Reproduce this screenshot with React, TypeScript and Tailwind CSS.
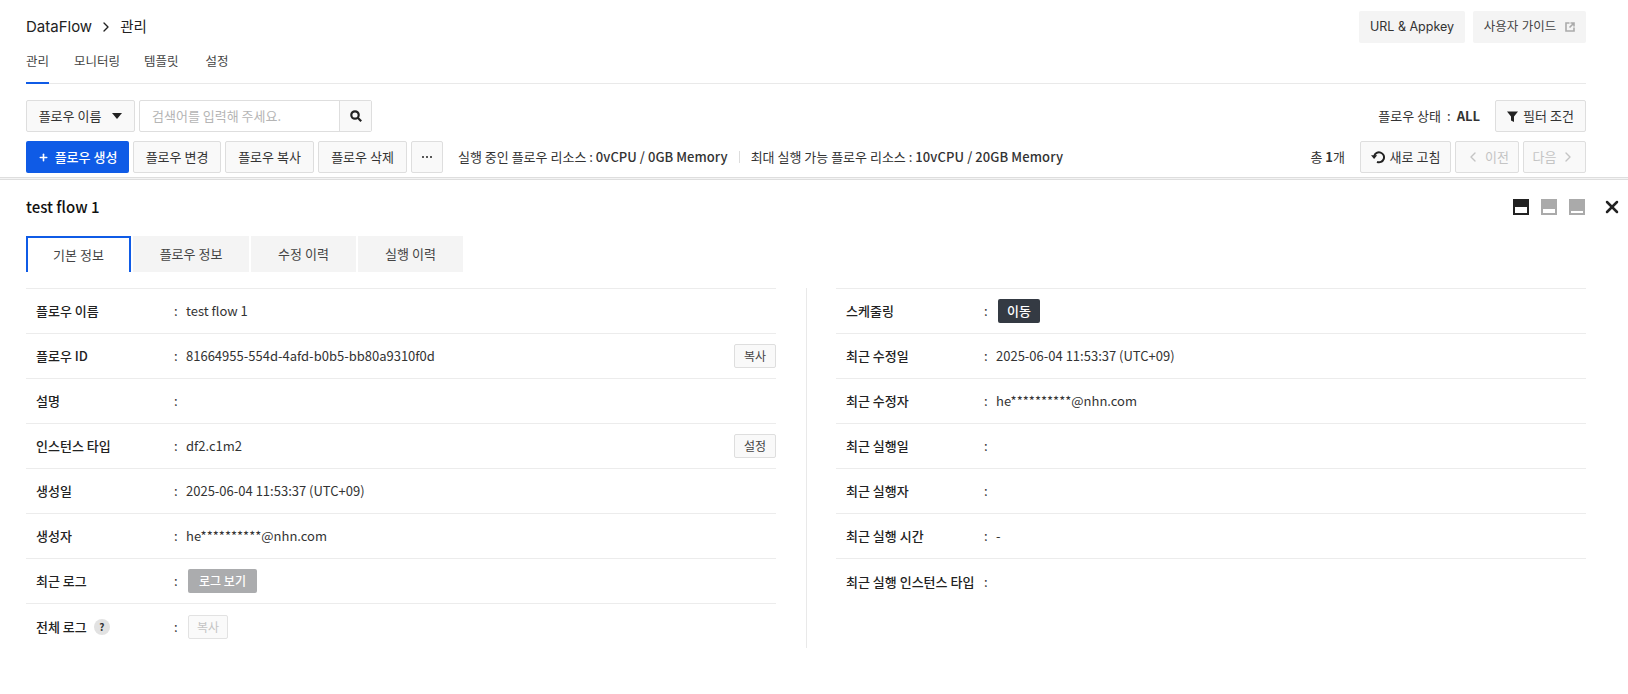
import React from 'react';
import { ChevronLeft, ChevronRight, Plus, X } from 'lucide-react';

const sans = 'font-["Noto_Sans_CJK_KR",sans-serif]';
const inter = 'font-["Inter","Noto_Sans_CJK_KR",sans-serif]';

const btn =
  'flex h-8 items-center justify-center rounded-[2px] border border-[#dedede] bg-[#f9f9f9] text-[13px] text-[#333]';

type Row = { label: string; value?: React.ReactNode; extra?: React.ReactNode; help?: boolean };

const SmallButton = ({ children, disabled }: { children: React.ReactNode; disabled?: boolean }) => (
  <button
    className={`flex h-6 items-center justify-center rounded-[2px] border text-[12px] ${
      disabled ? 'w-10 border-[#e2e2e2] bg-[#fafafa] text-[#c4c4c4]' : 'w-[42px] border-[#dedede] bg-[#f9f9f9] text-[#444]'
    }`}
  >
    {children}
  </button>
);

const leftRows: Row[] = [
  { label: '플로우 이름', value: 'test flow 1' },
  { label: '플로우 ID', value: '81664955-554d-4afd-b0b5-bb80a9310f0d', extra: <SmallButton>복사</SmallButton> },
  { label: '설명' },
  { label: '인스턴스 타입', value: 'df2.c1m2', extra: <SmallButton>설정</SmallButton> },
  { label: '생성일', value: '2025-06-04 11:53:37 (UTC+09)' },
  { label: '생성자', value: 'he**********@nhn.com' },
  {
    label: '최근 로그',
    value: (
      <span className="ml-0.5 flex h-6 w-[69px] items-center justify-center rounded-[2px] bg-[#abacae] text-[12px] font-medium text-white">
        로그 보기
      </span>
    ),
  },
  { label: '전체 로그', help: true, value: <span className="ml-0.5 block w-10"><SmallButton disabled>복사</SmallButton></span> },
];

const rightRows: Row[] = [
  {
    label: '스케줄링',
    value: (
      <span className="ml-0.5 flex h-6 w-[42px] items-center justify-center rounded-[2px] bg-[#343a43] text-[13px] font-medium text-white">
        이동
      </span>
    ),
  },
  { label: '최근 수정일', value: '2025-06-04 11:53:37 (UTC+09)' },
  { label: '최근 수정자', value: 'he**********@nhn.com' },
  { label: '최근 실행일' },
  { label: '최근 실행자' },
  { label: '최근 실행 시간', value: '-' },
  { label: '최근 실행 인스턴스 타입' },
];

const InfoRow = ({ row }: { row: Row }) => (
  <div className="flex h-[45px] items-center border-b border-[#ececec] pl-[10px] text-[13px] text-[#333] last:border-b-0">
    <div className="flex w-[138px] shrink-0 items-center gap-[7px] font-medium text-[#222]">
      {row.label}
      {row.help && (
        <span className="flex h-4 w-4 items-center justify-center rounded-full bg-[#e2e2e2] text-[10px] font-bold text-[#333]">
          ?
        </span>
      )}
    </div>
    <span className="w-3 shrink-0 whitespace-nowrap">:</span>
    <div className="flex-1">{row.value}</div>
    {row.extra}
  </div>
);

const PanelIcon = ({ mode }: { mode: 'top' | 'mid' | 'low' }) => {
  const fill = mode === 'top' ? '#222' : '#aaa';
  return (
    <svg width="16" height="16" viewBox="0 0 16 16">
      <rect width="16" height="16" fill={fill} />
      {mode === 'top' && <rect x="2" y="8" width="12" height="6" fill="#fff" />}
      {mode === 'mid' && <rect x="2" y="10" width="12" height="4" fill="#fff" />}
      {mode === 'low' && <rect x="2" y="12" width="12" height="2" fill="#fff" />}
    </svg>
  );
};

export default function App() {
  return (
    <div className={`h-[694px] w-[1628px] overflow-hidden bg-white ${sans}`}>
      {/* Top area */}
      <div className="pl-[26px] pr-[42px]">
        <div className={`flex h-[52px] items-center justify-between pt-[2px] ${inter}`}>
          <div className="flex items-center text-[15px] text-[#222]">
            DataFlow
            <ChevronRight className="mx-[6px] h-4 w-4" strokeWidth={2} />
            <span className="text-[14.5px]">관리</span>
          </div>
          <div className="flex gap-2">
            <button className="h-8 w-[106px] rounded-[2px] bg-[#f4f4f4] text-[12.5px] text-[#333]">URL &amp; Appkey</button>
            <button className="flex h-8 w-[113px] items-center justify-center gap-[9px] rounded-[2px] bg-[#f4f4f4] text-[12.5px] text-[#444]">
              사용자 가이드
              <svg width="10" height="10" viewBox="0 0 10 10" fill="none" stroke="#aaa" strokeWidth="1.6">
                <path d="M4.5 1H1v8h8V5.5" />
                <path d="M5.5 1H9v3.5M9 1 4.5 5.5" />
              </svg>
            </button>
          </div>
        </div>
        <div className={`flex h-8 items-start border-b border-[#e9e9e9] text-[12.5px] text-[#444] ${inter}`}>
          <div className="mr-[25px] h-8 border-b-2 border-[#0f5be6] pt-[1px]">관리</div>
          <div className="mr-[24px] pt-[1px]">모니터링</div>
          <div className="mr-[27px] pt-[1px]">템플릿</div>
          <div className="pt-[1px]">설정</div>
        </div>

        {/* Search */}
        <div className="mt-4 flex h-8 items-center justify-between">
          <div className="flex">
            <button className={`${btn} w-[109px] gap-[11px]`}>
              플로우 이름
              <span className="h-0 w-0 border-x-[5px] border-t-[6px] border-x-transparent border-t-[#222]" />
            </button>
            <div className="ml-1 flex h-8 w-[233px] rounded-[2px] border border-[#dedede]">
              <div className="flex flex-1 items-center pl-[12px] text-[13px] text-[#b5b5b5]">검색어를 입력해 주세요.</div>
              <div className="flex w-[32px] items-center justify-center border-l border-[#dedede] bg-[#f9f9f9]">
                <svg width="12" height="12" viewBox="0 0 12 12" fill="none" stroke="#222" strokeWidth="2.2">
                  <circle cx="5" cy="5" r="3.7" />
                  <path d="m7.8 7.8 3.4 3.4" />
                </svg>
              </div>
            </div>
          </div>
          <div className="flex items-center text-[13px] text-[#333]">
            플로우 상태
            <span className="mx-[6px]">:</span>
            <b className="mr-[15px] font-bold">ALL</b>
            <button className={`${btn} w-[91px] gap-[5px]`}>
              <svg width="11" height="11" viewBox="0 0 11 11" fill="#222">
                <path d="M0 .5h11L7 5.5V11L4 9.5V5.5z" />
              </svg>
              필터 조건
            </button>
          </div>
        </div>

        {/* Toolbar */}
        <div className="mt-[9px] flex h-8 items-center">
          <button className="flex h-8 w-[103px] items-center justify-center gap-[6px] rounded-[2px] bg-[#0f5be6] text-[13px] font-medium text-white">
            <Plus className="h-[11px] w-[11px]" strokeWidth={3.5} />
            플로우 생성
          </button>
          <button className={`${btn} ml-1 w-[88px]`}>플로우 변경</button>
          <button className={`${btn} ml-1 w-[89px]`}>플로우 복사</button>
          <button className={`${btn} ml-1 w-[89px]`}>플로우 삭제</button>
          <button className={`${btn} ml-1 w-[32px] gap-[2px]`}>
            <span className="h-[2px] w-[2px] rounded-full bg-[#222]" />
            <span className="h-[2px] w-[2px] rounded-full bg-[#222]" />
            <span className="h-[2px] w-[2px] rounded-full bg-[#222]" />
          </button>
          <div className="ml-[15px] flex items-center text-[13px] text-[#333]">
            실행 중인 플로우 리소스 :&nbsp;<span className="font-medium tracking-[0.05px]">0vCPU / 0GB Memory</span>
            <span className="mx-[11px] h-3 w-px bg-[#ddd]" />
            최대 실행 가능 플로우 리소스 :&nbsp;<span className="font-medium tracking-[0.1px]">10vCPU / 20GB Memory</span>
          </div>
          <div className="ml-auto flex items-center text-[13px] text-[#333]">
            <span className="mr-[15px]">
              총 <b className="font-bold">1</b>개
            </span>
            <button className={`${btn} w-[91px] gap-[5px]`}>
              <svg width="14" height="14" viewBox="0 0 14 14" fill="none" stroke="#222" strokeWidth="2">
                <path d="M3.2 6A5 5 0 1 1 6 11.9" />
                <path d="M0 5.2h6.2L3.1 9z" fill="#222" stroke="none" />
              </svg>
              새로 고침
            </button>
            <button className={`${btn} ml-1 w-16 gap-1 !text-[#c4c4c4]`}>
              <ChevronLeft className="h-4 w-4" />
              이전
            </button>
            <button className={`${btn} ml-1 w-[63px] gap-1 !text-[#c4c4c4]`}>
              다음
              <ChevronRight className="h-4 w-4" />
            </button>
          </div>
        </div>
      </div>

      {/* Splitter */}
      <div className="mt-1 h-[3px] border-y border-[#dedede] bg-[#f4f4f4]" />

      {/* Detail panel */}
      <div className="pl-[26px] pr-[6px]">
        <div className="flex h-[54px] items-center justify-between">
          <div className="text-[15px] font-medium text-[#111]">test flow 1</div>
          <div className="flex items-center gap-3">
            <PanelIcon mode="top" />
            <PanelIcon mode="mid" />
            <PanelIcon mode="low" />
            <X className="ml-[5px] h-5 w-5 text-[#222]" strokeWidth={3} />
          </div>
        </div>
        <div className="mt-[2px] flex h-[36px] gap-[2px] text-[13px] text-[#444]">
          <div className="flex w-[105px] items-center justify-center border-x-2 border-t-2 border-[#0f5be6]">기본 정보</div>
          <div className="flex w-[116px] items-center justify-center bg-[#f4f4f4]">플로우 정보</div>
          <div className="flex w-[105px] items-center justify-center bg-[#f4f4f4]">수정 이력</div>
          <div className="flex w-[105px] items-center justify-center bg-[#f4f4f4]">실행 이력</div>
        </div>
        <div className="mt-4 flex pr-[36px]">
          <div className="w-[750px] border-t border-[#ececec]">
            {leftRows.map((r) => (
              <InfoRow key={r.label} row={r} />
            ))}
          </div>
          <div className="ml-[30px] h-[360px] w-px bg-[#e9e9e9]" />
          <div className="ml-[29px] flex-1 border-t border-[#ececec]">
            {rightRows.map((r) => (
              <InfoRow key={r.label} row={r} />
            ))}
          </div>
        </div>
      </div>
    </div>
  );
}
